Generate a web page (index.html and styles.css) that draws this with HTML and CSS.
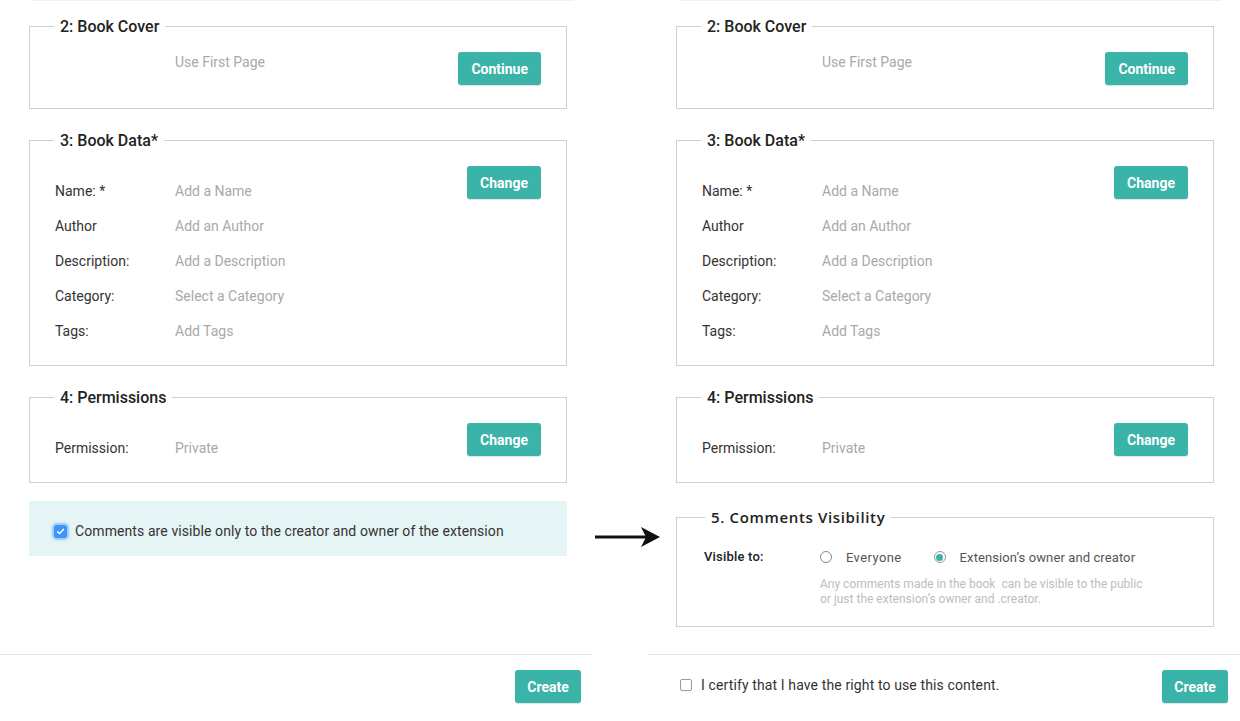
FILE: index.html
```html
<!DOCTYPE html>
<html>
<head>
<meta charset="utf-8">
<link rel="stylesheet" href="styles.css">
</head>
<body>
<div class="page">
  <section class="panel">
    <div class="main">
      <div class="topline"></div>
      <fieldset class="box box-cover">
        <legend>2: Book Cover</legend>
        <div class="box-body">
          <div class="cover-row"><span class="label"></span><span class="value">Use First Page</span></div>
          <button class="btn">Continue</button>
        </div>
      </fieldset>
      <fieldset class="box">
        <legend>3: Book Data*</legend>
        <div class="box-body">
          <div class="rows">
            <div class="row"><span class="label">Name: *</span><span class="value">Add a Name</span></div>
            <div class="row"><span class="label">Author</span><span class="value">Add an Author</span></div>
            <div class="row"><span class="label">Description:</span><span class="value">Add a Description</span></div>
            <div class="row"><span class="label">Category:</span><span class="value">Select a Category</span></div>
            <div class="row"><span class="label">Tags:</span><span class="value">Add Tags</span></div>
          </div>
          <button class="btn">Change</button>
        </div>
      </fieldset>
      <fieldset class="box">
        <legend>4: Permissions</legend>
        <div class="box-body">
          <div class="rows">
            <div class="row"><span class="label">Permission:</span><span class="value">Private</span></div>
          </div>
          <button class="btn">Change</button>
        </div>
      </fieldset>
      <div class="notice">
        <span class="check-on"><svg width="9" height="9" viewBox="0 0 9 9"><path d="M1.6 4.7 L3.6 6.6 L7.4 2.4" fill="none" stroke="#fff" stroke-width="1.5" stroke-linecap="round" stroke-linejoin="round"/></svg></span>
        <span class="notice-text">Comments are visible only to the creator and owner of the extension</span>
      </div>
    </div>
    <footer class="footer">
      <span></span>
      <button class="btn">Create</button>
    </footer>
  </section>

  <div class="gutter">
    <svg class="arrow" width="66" height="22" viewBox="0 0 66 22"><path d="M0 11 H52" stroke="#111" stroke-width="3"/><path d="M46 1 L65 11 L46 21 L51 11 Z" fill="#111"/></svg>
  </div>

  <section class="panel">
    <div class="main">
      <div class="topline"></div>
      <fieldset class="box box-cover">
        <legend>2: Book Cover</legend>
        <div class="box-body">
          <div class="cover-row"><span class="label"></span><span class="value">Use First Page</span></div>
          <button class="btn">Continue</button>
        </div>
      </fieldset>
      <fieldset class="box">
        <legend>3: Book Data*</legend>
        <div class="box-body">
          <div class="rows">
            <div class="row"><span class="label">Name: *</span><span class="value">Add a Name</span></div>
            <div class="row"><span class="label">Author</span><span class="value">Add an Author</span></div>
            <div class="row"><span class="label">Description:</span><span class="value">Add a Description</span></div>
            <div class="row"><span class="label">Category:</span><span class="value">Select a Category</span></div>
            <div class="row"><span class="label">Tags:</span><span class="value">Add Tags</span></div>
          </div>
          <button class="btn">Change</button>
        </div>
      </fieldset>
      <fieldset class="box">
        <legend>4: Permissions</legend>
        <div class="box-body">
          <div class="rows">
            <div class="row"><span class="label">Permission:</span><span class="value">Private</span></div>
          </div>
          <button class="btn">Change</button>
        </div>
      </fieldset>
      <fieldset class="box box-vis">
        <legend>5. Comments Visibility</legend>
        <div class="vis-grid">
          <span class="vis-label">Visible to:</span>
          <div class="vis-options">
            <div class="radios">
              <span class="radio"></span><span class="radio-text">Everyone</span>
              <span class="radio radio-on"><span class="dot"></span></span><span class="radio-text radio-text-2">Extension’s owner and creator</span>
            </div>
            <p class="help">Any comments made in the book &nbsp;can be visible to the public<br>or just the extension’s owner and .creator.</p>
          </div>
        </div>
      </fieldset>
    </div>
    <footer class="footer">
      <label class="certify"><span class="check-off"></span><span>I certify that I have the right to use this content.</span></label>
      <button class="btn">Create</button>
    </footer>
  </section>
</div>
</body>
</html>
```

FILE: styles.css
```css
* { box-sizing: border-box; }
html, body { margin: 0; padding: 0; background: #fff; }
body {
  font-family: Roboto, "Liberation Sans", sans-serif;
  font-size: 14px;
  color: #333;
  width: 1240px;
  height: 721px;
  overflow: hidden;
}
.page {
  position: relative;
  display: grid;
  grid-template-columns: 593px 54px 593px;
  height: 721px;
}
.panel {
  display: flex;
  flex-direction: column;
  height: 721px;
}
.main {
  flex: 1;
  padding: 0 26px 0 29px;
}
.topline {
  height: 1px;
  background: #f1f1f1;
  margin: 0 -7px 15px 3px;
}
.box {
  margin: 21px 0 0;
  padding: 16px 25px 16px 25px;
  border: 1px solid #cfcfcf;
  min-inline-size: 0;
}
.topline + .box { margin-top: 0; }
.box legend {
  font-size: 16px;
  line-height: 19px;
  font-weight: 500;
  color: #222;
  padding: 1px 6px 0;
  margin-left: -1px;
}
.box-body {
  display: flex;
  justify-content: space-between;
  align-items: flex-start;
}
.box-cover { padding-bottom: 23px; }
.cover-row { display: flex; line-height: 20px; }
.rows { padding-top: 8px; }
.row { display: flex; line-height: 35px; }
.label { width: 120px; color: #333; }
.value { color: #a9a9a9; }
.btn {
  font-family: Roboto, "Liberation Sans", sans-serif;
  font-size: 14px;
  font-weight: 700;
  color: #fff;
  background: #3ab3a9;
  border: none;
  border-radius: 3px;
  height: 33px;
  padding: 0 13px;
  box-shadow: 0 1px 1px rgba(0,0,0,0.12);
}
.notice {
  margin-top: 18px;
  height: 55px;
  background: #e5f4f4;
  display: flex;
  align-items: center;
  padding: 5px 25px 0;
  gap: 8px;
  color: #333;
}
.notice-text { letter-spacing: 0.09px; }
.check-on {
  width: 13px;
  height: 13px;
  border-radius: 3px;
  background: #3b95f5;
  box-shadow: 0 0 2px 2px rgba(90, 160, 250, 0.55);
  display: flex;
  align-items: center;
  justify-content: center;
}
.footer {
  height: 67px;
  border-top: 1px solid #e6e6e6;
  display: flex;
  justify-content: space-between;
  align-items: center;
  padding: 0 12px 0 33px;
}
.footer .btn { width: 66px; padding: 0; margin-top: -3px; }
.certify { display: flex; align-items: center; gap: 9px; margin-top: -7px; color: #333; letter-spacing: 0.12px; }
.check-off {
  width: 12px;
  height: 12px;
  border: 1px solid #9a9a9a;
  border-radius: 2px;
  background: #fff;
}
.gutter { position: relative; }
.arrow { position: absolute; left: 2px; top: 526px; }

.box-vis { margin-top: 24px; padding: 20px 25px 19px 27px; }
.box-vis legend {
  font-family: "Open Sans", Roboto, sans-serif;
  font-size: 15px;
  line-height: 20px;
  font-weight: 600;
  letter-spacing: 0.65px;
  margin-left: 1px;
  padding: 0 6px;
}
.vis-grid {
  display: grid;
  grid-template-columns: 116px 1fr;
  font-size: 13px;
}
.vis-label { line-height: 20px; color: #222; font-weight: 500; letter-spacing: 0.2px; }
.radios { display: flex; align-items: center; height: 20px; }
.radio {
  width: 12px;
  height: 12px;
  border: 1px solid #8a8a8a;
  border-radius: 50%;
  display: flex;
  align-items: center;
  justify-content: center;
  margin-right: 14px;
}
.radio-on { border-color: #9a9a9a; margin-left: 32px; }
.dot { width: 7px; height: 7px; border-radius: 50%; background: #3ab3a9; }
.radio-text { color: #555; letter-spacing: 0.4px; }
.radio-text-2 { letter-spacing: 0.1px; }
.help {
  margin: 10px 0 0;
  font-size: 12px;
  line-height: 15px;
  color: #bdbdbd;
}
```
